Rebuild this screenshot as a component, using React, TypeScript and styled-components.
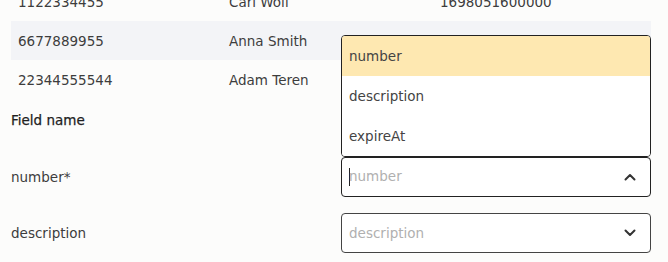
import React from 'react';
import styled, { createGlobalStyle } from 'styled-components';

const GlobalStyle = createGlobalStyle`
  html, body {
    margin: 0;
    padding: 0;
    background-color: #fcfcfb;
  }

  body {
    font-family: 'DejaVu Sans', 'Noto Sans', sans-serif;
    font-size: 13.5px;
    color: #3d3d3d;
    overflow: hidden;
  }
`;

const Page = styled.div`
  width: 640px;
  padding-left: 11px;
  margin-top: -18px;
`;

const Table = styled.div`
  display: flex;
  flex-direction: column;
`;

const TableRow = styled.div<{ $shaded?: boolean }>`
  display: grid;
  grid-template-columns: 211px 211px 1fr;
  height: 39px;
  background-color: ${(p) => (p.$shaded ? '#f3f4f7' : 'transparent')};
`;

const TableCell = styled.div`
  display: flex;
  align-items: center;
  padding: 0 7px;
  white-space: nowrap;
`;

const Form = styled.div`
  display: flex;
  flex-direction: column;
  gap: 16px;
`;

const FormHeader = styled.div`
  display: grid;
  grid-template-columns: 330px 310px;
  height: 42px;
  align-items: center;
`;

const HeaderLabel = styled.div`
  color: #1f1f1f;
  -webkit-text-stroke: 0.25px #1f1f1f;
`;

const FormRow = styled.div`
  display: grid;
  grid-template-columns: 330px 310px;
  align-items: center;
`;

const FieldLabel = styled.div`
  color: #3d3d3d;
`;

const SelectBox = styled.div<{ $focused?: boolean }>`
  position: relative;
  box-sizing: border-box;
  height: 40px;
  border: 1px solid ${(p) => (p.$focused ? '#222' : '#444')};
  border-radius: 4px;
  background-color: #ffffff;

  display: flex;
  align-items: center;
  padding: 0 14px 0 7px;
`;

const Placeholder = styled.span`
  flex: 1;
  color: #b0b0b0;
`;

const Caret = styled.span`
  display: inline-block;
  width: 1px;
  height: 18px;
  background-color: #222;
  vertical-align: middle;
  margin-right: -1px;
`;

const Chevron = styled.svg`
  width: 12px;
  height: 8px;
  color: #333;
`;

const Menu = styled.ul`
  position: absolute;
  left: -1px;
  right: -1px;
  bottom: calc(100% + 1px);
  margin: 0;
  padding: 0;
  list-style: none;
  background-color: #ffffff;
  border: 1px solid #222;
  border-radius: 4px;
  overflow: hidden;
`;

const MenuOption = styled.li<{ $active?: boolean }>`
  height: 40px;
  display: flex;
  align-items: center;
  padding: 0 7px;
  color: #444;
  background-color: ${(p) => (p.$active ? '#fee8b1' : '#ffffff')};
`;

const rows = [
  { number: '1122334455', name: 'Carl Wolf', expireAt: '1698051600000' },
  { number: '6677889955', name: 'Anna Smith', expireAt: '1698051600000' },
  { number: '22344555544', name: 'Adam Teren', expireAt: '1698051600000' },
];

const ChevronIcon: React.FC<{ up?: boolean }> = ({ up }) => (
  <Chevron viewBox="0 0 12 8" fill="none">
    <path
      d={up ? 'M1.5 6.5 L6 2 L10.5 6.5' : 'M1.5 1.5 L6 6 L10.5 1.5'}
      stroke="currentColor"
      strokeWidth="2"
      strokeLinecap="round"
      strokeLinejoin="round"
    />
  </Chevron>
);

const App: React.FC = () => {
  return (
    <>
      <GlobalStyle />
      <Page>
        <Table>
          {rows.map((row, i) => (
            <TableRow key={row.number} $shaded={i === 1}>
              <TableCell>{row.number}</TableCell>
              <TableCell>{row.name}</TableCell>
              <TableCell>{row.expireAt}</TableCell>
            </TableRow>
          ))}
        </Table>
        <Form>
          <FormHeader>
            <HeaderLabel>Field name</HeaderLabel>
          </FormHeader>
          <FormRow>
            <FieldLabel>number*</FieldLabel>
            <SelectBox $focused>
              <Menu>
                <MenuOption $active>number</MenuOption>
                <MenuOption>description</MenuOption>
                <MenuOption>expireAt</MenuOption>
              </Menu>
              <Placeholder>
                <Caret />
                number
              </Placeholder>
              <ChevronIcon up />
            </SelectBox>
          </FormRow>
          <FormRow>
            <FieldLabel>description</FieldLabel>
            <SelectBox>
              <Placeholder>description</Placeholder>
              <ChevronIcon />
            </SelectBox>
          </FormRow>
        </Form>
      </Page>
    </>
  );
};

export default App;
